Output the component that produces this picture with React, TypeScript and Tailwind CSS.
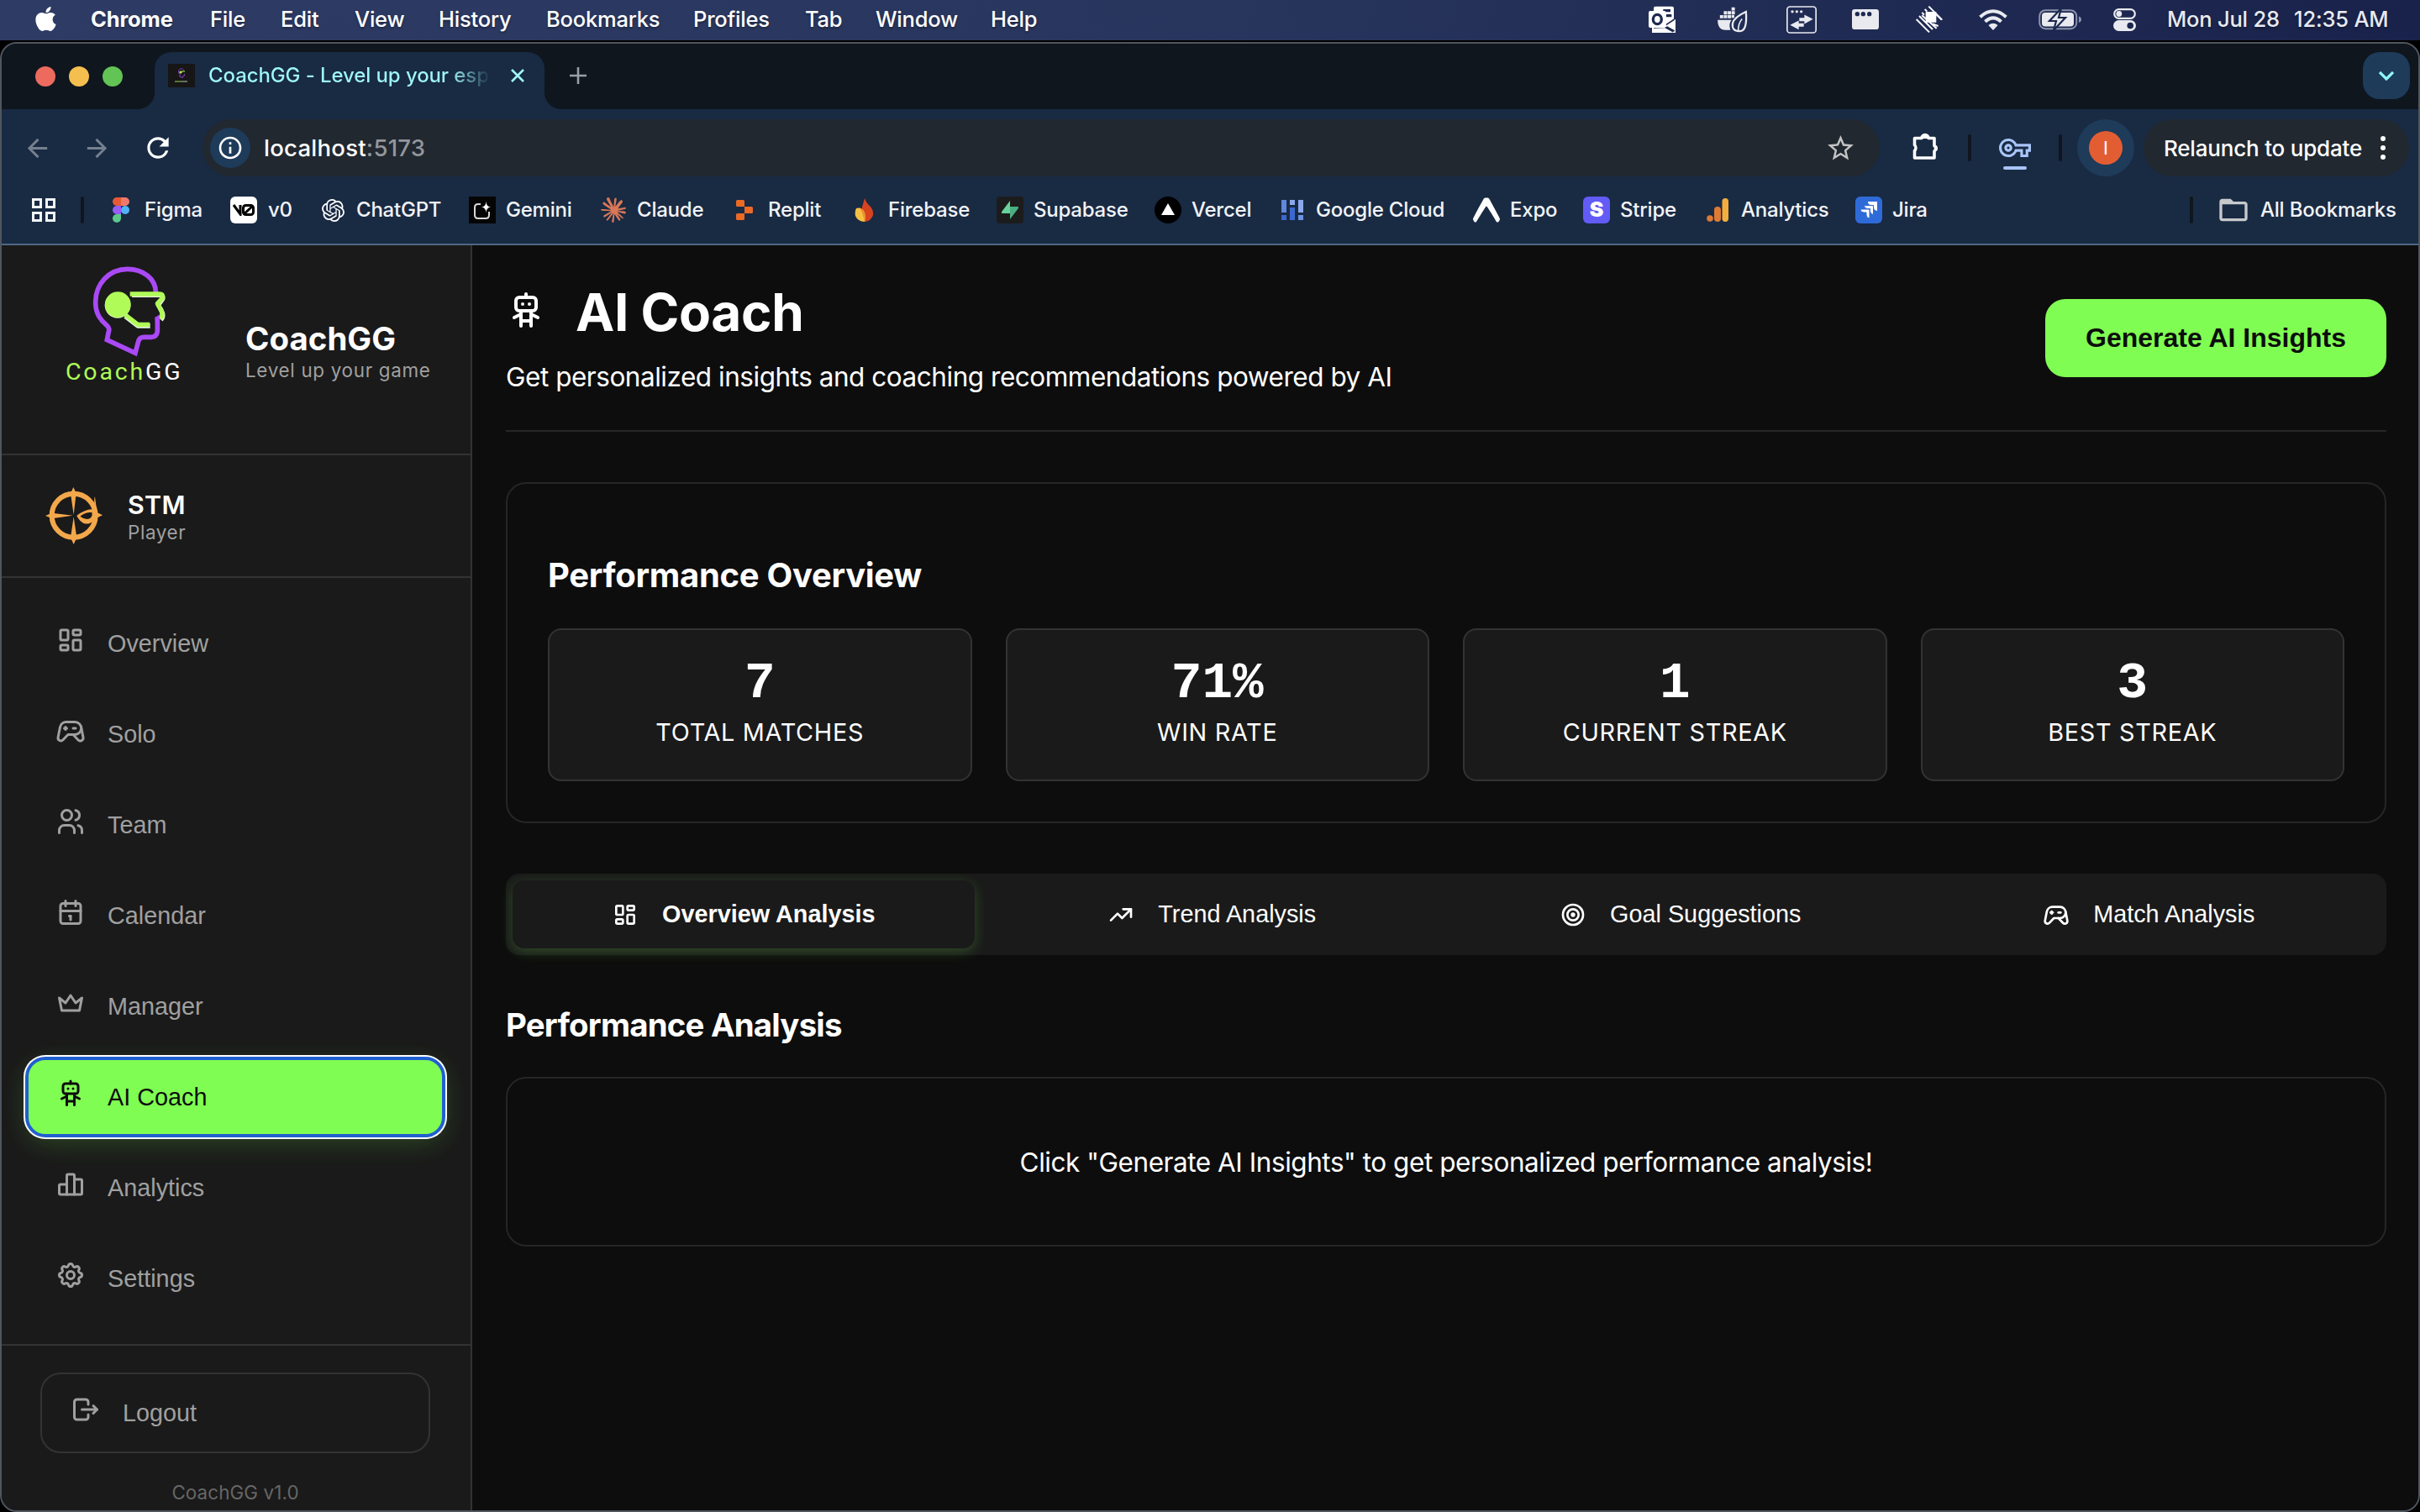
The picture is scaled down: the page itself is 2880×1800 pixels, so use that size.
import type { ReactNode } from "react";
import { FaApple } from "react-icons/fa";
import {
  MdArrowBack,
  MdArrowForward,
  MdRefresh,
  MdStarBorder,
  MdInfoOutline,
  MdOutlineVpnKey,
  MdFolderOpen,
} from "react-icons/md";
import { SiOpenai, SiReplit, SiExpo, SiClaude } from "react-icons/si";
import {
  TbLayoutDashboard,
  TbDeviceGamepad2,
  TbUsers,
  TbCalendar,
  TbCrown,
  TbSettings,
  TbLogout,
  TbTrendingUp,
  TbTarget,
} from "react-icons/tb";

type IconProps = { className?: string };

/* ---------- hand-drawn icons ---------- */

function Robot({ className }: IconProps) {
  return (
    <svg viewBox="0 0 24 24" className={className} fill="none" stroke="currentColor" strokeWidth="2" strokeLinecap="round" strokeLinejoin="round">
      <path d="M6 6a2 2 0 0 1 2 -2h8a2 2 0 0 1 2 2v4a2 2 0 0 1 -2 2h-8a2 2 0 0 1 -2 -2l0 -4" />
      <path d="M12 2v2M9 12v9M15 12v9M5 16l4 -2M15 14l4 2M9 18h6M10 8v.01M14 8v.01" />
    </svg>
  );
}

function Bars({ className }: IconProps) {
  return (
    <svg viewBox="0 0 24 24" className={className} fill="none" stroke="currentColor" strokeWidth="2" strokeLinecap="round" strokeLinejoin="round">
      <path d="M3 13a1 1 0 0 1 1 -1h4a1 1 0 0 1 1 1v7H4a1 1 0 0 1 -1 -1z" />
      <path d="M15 9a1 1 0 0 1 1 -1h4a1 1 0 0 1 1 1v10a1 1 0 0 1 -1 1h-5z" />
      <path d="M9 5a1 1 0 0 1 1 -1h4a1 1 0 0 1 1 1v15h-6z" />
    </svg>
  );
}

function Puzzle({ className }: IconProps) {
  return (
    <svg viewBox="0 0 34 34" className={className}>
      <path
        d="M3.500 7.500h8.500a4 4 0 0 1 8 0h7v9a4 4 0 0 1 0 6.500v8H3.500v-8.500a5 5 0 0 0 0 -7z"
        fill="none"
        stroke="currentColor"
        strokeWidth="3.600"
        strokeLinejoin="round"
      />
      <path d="M12 8a4 4 0 0 1 8 0zM27 15.500a4 4 0 0 1 0 8z" fill="currentColor" />
    </svg>
  );
}

function CoachLogo() {
  return (
    <svg viewBox="0 0 420 348" className="h-[116px] w-[140px]">
      <g fill="none" strokeLinejoin="round">
        <path d="M358 117C358 70 315 34 257 34C190 34 143 88 143 152C143 196 163 218 184 236C194 245 192 252 189 262L184 287L285 334L294 300Q297 277 315 277H342Q362 277 364 256V205" stroke="#aa49f6" strokeWidth="17" strokeLinejoin="miter" />
        <path d="M272 124H372Q386 124 382 138L366 160Q376 172 382 190Q385 202 376 212" stroke="#e8f5dc" strokeWidth="16" transform="translate(1 3)" />
        <path d="M266 123H372Q386 123 382 137L364 157Q372 172 380 188Q384 202 374 210" stroke="#b0fb58" strokeWidth="16" />
        <path d="M250 200L294 234H338" stroke="#e8f5dc" strokeWidth="18" transform="translate(0 2)" />
        <path d="M250 198L294 232H336" stroke="#b0fb58" strokeWidth="16" />
      </g>
      <circle cx="222" cy="163" r="46" fill="#e8f5dc" />
      <circle cx="223" cy="161" r="46" fill="#b0fb58" />
      <path d="M356 208L371 196V220H356z" fill="#aa49f6" />
    </svg>
  );
}

function Compass() {
  return (
    <svg viewBox="0 0 204 204" className="size-[68px]" fill="#f3a84b">
      <circle cx="101" cy="101" r="78" fill="none" stroke="#f3a84b" strokeWidth="18" />
      <path d="M100 0L110 22L101 98L90 22zM101 106L112 180L101 204L90 180zM0 102L24 92L98 101L24 112zM204 100L180 88V112z" />
      <path d="M177 32C170 56 180 60 176 78C150 78 128 88 112 102C124 126 142 136 160 128C176 122 182 108 180 84C184 66 178 50 177 32z" />
      <path d="M124 104Q142 88 166 90Q170 106 158 112Q142 118 124 104z" fill="#1a1a1a" />
    </svg>
  );
}

/* ---------- menu bar ---------- */

const menus: [string, string][] = [
  ["File", "w-[84px]"],
  ["Edit", "w-[88px]"],
  ["View", "w-[100px]"],
  ["History", "w-[128px]"],
  ["Bookmarks", "w-[175px]"],
  ["Profiles", "w-[133px]"],
  ["Tab", "w-[84px]"],
  ["Window", "w-[137px]"],
  ["Help", "w-[80px]"],
];

function MenuBar() {
  return (
    <header className="flex h-12 shrink-0 items-center bg-linear-to-r from-[#2e3b65] via-[#28355d] to-[#19224a] pb-0.5 pl-10 text-[25.5px] font-medium tracking-[-0.2px] whitespace-nowrap text-white [text-shadow:0_2px_3px_rgba(0,0,0,0.35)]">
      <FaApple className="mb-0.5 -ml-0.5 size-[33px]" />
      <span className="ml-[37px] w-[142px] text-[25.5px] font-bold tracking-[-0.15px]">Chrome</span>
      {menus.map(([m, w]) => (
        <span key={m} className={w}>
          {m}
        </span>
      ))}
      <div className="flex-1" />
      <div className="flex items-center text-[#e8eaf0]">
        <div className="w-[82px]">
          <svg viewBox="0 0 96 96" className="size-8">
            <path d="M18 8q0 -6 6 -6H84q6 0 6 6V60H18z" fill="#fff" />
            <path d="M52 12H78V22H52zM62 30H82V40H62z" fill="#1f2a50" />
            <path d="M12 48H96V96H12z" fill="#fff" />
            <path d="M18 78L58 76L88 92M62 68L92 48M64 74L92 90" stroke="#1f2a50" strokeWidth="5" fill="none" />
            <rect x="0" y="18" width="62" height="60" rx="6" fill="#fff" />
            <ellipse cx="31" cy="48" rx="15" ry="17" fill="none" stroke="#1f2a50" strokeWidth="10" />
          </svg>
        </div>
        <div className="w-[82px]">
          <svg viewBox="0 0 108 94" className="h-[31px] w-9" fill="currentColor">
            <path d="M8 30h12v12H8zM22 30h12v12H22zM36 30h12v12H36zM22 16h12v12H22zM36 16h12v12H36zM50 16h12v12H50zM50 2h12v12H50zM50 30h10v10H50z" />
            <path d="M0 48H50Q38 62 46 84H28Q0 84 0 48z" />
            <path d="M102 18Q108 90 78 88Q50 88 54 60Q58 38 102 18z" fill="none" stroke="currentColor" strokeWidth="7" />
            <path d="M74 88Q74 60 88 44" fill="none" stroke="currentColor" strokeWidth="5" />
          </svg>
        </div>
        <div className="w-[78px]">
          <svg viewBox="0 0 108 98" className="h-[33px] w-9" fill="currentColor">
            <rect x="2.5" y="2.5" width="103" height="93" rx="10" fill="none" stroke="currentColor" strokeWidth="5" />
            <circle cx="21" cy="20" r="5" />
            <circle cx="37" cy="20" r="5" />
            <circle cx="53" cy="20" r="5" />
            <path d="M46 42H64V31L95 47L64 64V54H46z" />
            <path d="M62 62H44V52L13 68L44 84V74H62z" />
          </svg>
        </div>
        <div className="w-[76px]">
          <svg viewBox="0 0 96 72" className="h-6 w-8">
            <rect width="96" height="72" rx="10" fill="currentColor" />
            <circle cx="19" cy="17" r="8" fill="#1f2a50" />
            <circle cx="40" cy="17" r="8" fill="#1f2a50" />
            <circle cx="62" cy="17" r="8" fill="#1f2a50" />
          </svg>
        </div>
        <div className="w-[75px]">
          <svg viewBox="0 0 96 96" className="size-8" fill="none" stroke="#fff" strokeWidth="6">
            <path d="M46 2L94 50M32 12L40 20M22 24L30 32M12 36L60 84M2 48L48 94M22 34L74 80M60 64L80 72M74 32L92 50" />
            <path d="M38 24H70V56H38z" fill="#fff" />
          </svg>
        </div>
        <div className="w-[71px]">
          <svg viewBox="0 0 102 76" className="h-[25px] w-[34px]" fill="none" stroke="currentColor" strokeWidth="12">
            <path d="M4 28Q51 -14 98 28M22 45Q51 18 80 45" />
            <path d="M51 76L34 58Q51 44 68 58z" fill="currentColor" stroke="none" />
          </svg>
        </div>
        <div className="w-[89px]">
          <svg viewBox="0 0 52 26" className="h-[26px] w-[52px]">
            <rect x="1.2" y="2.2" width="44" height="22" rx="7" fill="none" stroke="#8b93ac" strokeWidth="2" />
            <rect x="4" y="5" width="38" height="16.500" rx="4" fill="currentColor" />
            <path d="M48 9.500q3 1 3 3.700t-3 3.700z" fill="#8b93ac" />
            <path d="M27 0L13 15h8l-3 11L32 11h-8z" fill="currentColor" stroke="#1c274d" strokeWidth="2.200" />
          </svg>
        </div>
        <div className="w-[64px]">
          <svg viewBox="0 0 27 27" className="size-[27px]">
            <rect x="1.200" y="1.200" width="24.600" height="10.600" rx="5.300" fill="none" stroke="currentColor" strokeWidth="2.200" />
            <circle cx="6.800" cy="6.500" r="3.400" fill="currentColor" />
            <rect y="14" width="27" height="13" rx="6.500" fill="currentColor" />
            <circle cx="20.200" cy="20.500" r="3.800" fill="#1c274d" />
          </svg>
        </div>
        <span className="w-[151px]">Mon Jul 28</span>
        <span className="w-[150px] tracking-[-0.2px]">12:35 AM</span>
      </div>
    </header>
  );
}

/* ---------- browser chrome ---------- */

function TabStrip() {
  return (
    <div className="flex h-[78px] shrink-0 items-start bg-[#0f161e] pt-2.5">
      <div className="flex h-[58px] w-[162px] items-center gap-4 pl-10">
        <i className="size-6 rounded-full bg-[#ed6a5f]" />
        <i className="size-6 rounded-full bg-[#f5bf4f]" />
        <i className="size-6 rounded-full bg-[#61c454]" />
      </div>
      <i className="h-5 w-5 self-end bg-[radial-gradient(circle_at_0_0,#0f161e_19.5px,#192a43_20.500px)]" />
      <div className="flex h-[68px] w-[464px] items-start rounded-t-[20px] bg-[#192a43] pl-4">
        <div className="mt-[14px] flex size-[32px] h-7 flex-col items-center justify-center bg-[#161616]">
          <svg viewBox="0 0 20 20" className="size-5">
            <path d="M13 4C12 1 7 1 6.500 5q0 3 2 4l-1 2 4 1.500 .6-2.500h1.500V8" fill="none" stroke="#8a3cc8" strokeWidth="1" />
            <circle cx="9" cy="6" r="1.600" fill="#b0fb58" />
            <path d="M10 5h4" stroke="#b0fb58" />
            <path d="M2 17h9" stroke="#6f9440" strokeWidth="1.500" />
            <path d="M11 17h6" stroke="#888" strokeWidth="1.500" />
          </svg>
        </div>
        <div className="mt-[11px] ml-4 w-[350px] bg-linear-to-r from-[#9ff8f8] from-82% to-transparent to-96% bg-clip-text text-[24px] leading-[34px] font-medium tracking-[-0.1px] whitespace-nowrap text-transparent">
          CoachGG - Level up your esp
        </div>
        <svg viewBox="0 0 16 16" className="mt-[20px] ml-[10px] size-4" stroke="#9ff8f8" strokeWidth="2.600">
          <path d="M1 1L15 15M15 1L1 15" />
        </svg>
      </div>
      <i className="h-5 w-5 self-end bg-[radial-gradient(circle_at_100%_0,#0f161e_19.5px,#192a43_20.500px)]" />
      <svg viewBox="0 0 20 20" className="mt-[18px] ml-2.5 size-5" stroke="#9a9fa6" strokeWidth="2.600">
        <path d="M10 0V20M0 10H20" />
      </svg>
      <div className="flex-1" />
      <div className="mr-2.5 flex size-14 items-center justify-center rounded-[20px] bg-[#1e3b5a]">
        <svg viewBox="0 0 18 12" className="h-3 w-[18px]" fill="none" stroke="#8ff6f6" strokeWidth="3.200">
          <path d="M1 2L9 10L17 2" />
        </svg>
      </div>
    </div>
  );
}

function Toolbar() {
  return (
    <div className="flex h-[92px] shrink-0 items-center pl-[25px] text-[27px] font-medium text-white">
      <MdArrowBack className="size-[35px] text-[#75808f]" />
      <MdArrowForward className="ml-[36px] size-[35px] text-[#75808f]" />
      <MdRefresh className="ml-[36px] size-[38px]" />
      <div className="ml-[34px] flex h-[68px] w-[1996px] items-center rounded-full bg-[#212830] pl-[9px]">
        <div className="flex size-12 items-center justify-center rounded-full bg-[#1e3b5a]">
          <MdInfoOutline className="size-8" />
        </div>
        <span className="ml-4 pt-px text-[27.5px] tracking-[0.25px]">
          localhost<span className="text-[#93979c]">:5173</span>
        </span>
        <MdStarBorder className="mr-[28px] ml-auto size-[37px] text-[#c3c3c3]" />
      </div>
      <Puzzle className="mb-1 ml-[38px] size-[34px]" />
      <i className="ml-[33px] h-8 w-1 rounded bg-[#0f161e]" />
      <div className="relative ml-[33px]">
        <MdOutlineVpnKey className="size-[38px] text-[#a9c5f8]" />
        <i className="absolute top-[41px] left-[5px] h-1 w-7 rounded bg-[#a9c5f8]" />
      </div>
      <i className="ml-[33px] h-8 w-1 rounded bg-[#0f161e]" />
      <div className="ml-[18px] flex size-[68px] items-center justify-center rounded-full bg-[#1e3b5a]">
        <div className="flex size-10 items-center justify-center rounded-full bg-[#e35d33] text-[22px] font-normal">I</div>
      </div>
      <div className="ml-[11px] flex h-[68px] w-[316px] items-center rounded-full bg-[#212830] pl-6">
        <span className="w-[258px] text-[26px] tracking-[-0.2px] whitespace-nowrap">Relaunch to update</span>
        <div className="flex flex-col gap-[5px]">
          <i className="size-1.5 rounded-full bg-white" />
          <i className="size-1.5 rounded-full bg-white" />
          <i className="size-1.5 rounded-full bg-white" />
        </div>
      </div>
    </div>
  );
}

const bookmarks: [string, string, ReactNode][] = [
  [
    "Figma",
    "w-[147px]",
    <svg viewBox="0 0 20 30" className="h-[30px] w-5">
      <path d="M10 0H5a5 5 0 0 0 0 10h5z" fill="#e55a35" />
      <path d="M10 0h5a5 5 0 0 1 0 10h-5z" fill="#f0796b" />
      <path d="M10 10H5a5 5 0 0 0 0 10h5z" fill="#965cf6" />
      <circle cx="15" cy="15" r="5" fill="#53b3f9" />
      <path d="M10 20H5a5 5 0 1 0 5 5z" fill="#5bc98a" />
    </svg>,
  ],
  [
    "v0",
    "w-[105px]",
    <div className="-ml-0.5 flex size-8 shrink-0 items-center justify-center rounded-md bg-white">
      <svg viewBox="0 0 26 14" className="h-3.5 w-[26px]" fill="none" stroke="#000" strokeWidth="3">
        <path d="M1 1L9 12V1" />
        <rect x="12.500" y="1.500" width="12" height="11" rx="3" />
        <path d="M13 12L24 2" />
      </svg>
    </div>,
  ],
  ["ChatGPT", "w-[178px]", <SiOpenai className="size-[27px] text-white" />],
  [
    "Gemini",
    "w-[156px]",
    <svg viewBox="0 0 32 32" className="size-8">
      <rect width="32" height="32" fill="#050505" />
      <path d="M14 9H11Q7 9 7 13V22Q7 26 11 26H20Q24 26 24 22V18" fill="none" stroke="#d8d8d8" strokeWidth="2" />
      <path d="M20.500 6Q21 12 26 12.500Q21 13 20.500 19Q20 13 15 12.500Q20 12 20.500 6z" fill="#fff" />
    </svg>,
  ],
  ["Claude", "w-[156px]", <SiClaude className="size-[30px] text-[#d97757]" />],
  ["Replit", "w-[143px]", <SiReplit className="size-6 text-[#ea6a26]" />],
  [
    "Firebase",
    "w-[173px]",
    <svg viewBox="0 0 24 28" className="h-7 w-6">
      <path d="M12 0Q14 6 19 10Q23 15 22 20Q20 27 12 28L8 14Q10 7 12 0z" fill="#d5431f" />
      <path d="M2 12Q7 10 11 15Q14 20 12 28Q4 28 1 21Q0 16 2 12z" fill="#f6c142" />
      <path d="M6 11Q10 13 12 18Q13 23 12 28Q10 18 6 11z" fill="#ee8d32" />
    </svg>,
  ],
  [
    "Supabase",
    "w-[188px]",
    <div className="flex size-8 items-center justify-center rounded-sm bg-[#1c1c1c]">
      <svg viewBox="0 0 22 26" className="h-[26px] w-[22px]">
        <path d="M11 2V17H2Q0 17 1.500 14.500z" fill="#68d39a" />
        <path d="M11 24V9H20Q22 9 20.500 11.500z" fill="#4aae80" />
      </svg>
    </div>,
  ],
  [
    "Vercel",
    "w-[148px]",
    <div className="flex size-8 items-center justify-center rounded-full bg-black">
      <svg viewBox="0 0 16 14" className="-mt-0.5 h-3.5 w-4">
        <path d="M8 0L16 14H0z" fill="#fff" />
      </svg>
    </div>,
  ],
  [
    "Google Cloud",
    "w-[231px]",
    <svg viewBox="0 0 26 24" className="h-6 w-[26px]">
      <path d="M0 0h6v15H0z" fill="#5f88dd" />
      <path d="M10 0h6v6h-6zM20 0h6v15h-6z" fill="#8ba9ea" />
      <path d="M10 9h6v15h-6zM0 18h6v6H0z" fill="#3c68ce" />
      <path d="M20 18h6v6h-6z" fill="#6c93e4" />
    </svg>,
  ],
  ["Expo", "w-[131px]", <SiExpo className="size-8 text-white" />],
  [
    "Stripe",
    "w-[144px]",
    <div className="flex size-8 items-center justify-center rounded-md bg-[#635bf6] text-[25px] font-black text-white">S</div>,
  ],
  [
    "Analytics",
    "w-[180px]",
    <svg viewBox="0 0 26 28" className="h-7 w-[26px]">
      <circle cx="4" cy="24" r="3.800" fill="#dd7a33" />
      <rect x="9" y="10" width="8" height="18" rx="4" fill="#dd7a33" />
      <rect x="18.500" y="0" width="7.500" height="28" rx="3.700" fill="#f3ae3d" />
    </svg>,
  ],
  [
    "Jira",
    "w-[120px]",
    <div className="flex size-8 items-center justify-center rounded-md bg-[#2f6bd8]">
      <svg viewBox="0 0 20 20" className="size-5" fill="#fff">
        <path d="M9 0H20V11Q16 10.500 16 7V4H13Q9 4 9 0z" />
        <path d="M4.500 4.500H15.500V15.500Q11.500 15 11.500 11.500V8.500H8.500Q4.500 8.500 4.500 4.500z" stroke="#2f6bd8" />
        <path d="M0 9H11V20Q7 19.500 7 16V13H4Q0 13 0 9z" stroke="#2f6bd8" />
      </svg>
    </div>,
  ],
];

function BookmarksBar() {
  return (
    <div className="flex h-[68px] shrink-0 items-start pt-3 pl-9 text-[24px] font-medium tracking-[-0.22px] whitespace-nowrap text-[#f1f3f6]">
      <svg viewBox="0 0 28 28" className="mt-0.5 size-7" fill="none" stroke="currentColor" strokeWidth="3">
        <path d="M1.500 1.500h9v9h-9zM17.500 1.500h9v9h-9zM1.500 17.500h9v9h-9zM17.500 17.500h9v9h-9z" />
      </svg>
      <i className="ml-[30px] h-8 w-1 rounded bg-[#0f161e]" />
      <div className="ml-7 flex">
        {bookmarks.map(([name, width, icon]) => (
          <div key={name} className={`flex h-8 items-center ${width}`}>
            <span className="flex w-8 shrink-0 justify-center">{icon}</span>
            <span className="ml-3">{name}</span>
          </div>
        ))}
      </div>
      <i className="ml-auto h-8 w-1 rounded bg-[#0f161e]" />
      <MdFolderOpen className="-mt-1 ml-[28px] size-10 text-[#c7c9cc]" />
      <span className="ml-3 w-[188px] leading-8">All Bookmarks</span>
    </div>
  );
}

/* ---------- sidebar ---------- */

const nav = [
  { label: "Overview", Icon: TbLayoutDashboard },
  { label: "Solo", Icon: TbDeviceGamepad2 },
  { label: "Team", Icon: TbUsers },
  { label: "Calendar", Icon: TbCalendar },
  { label: "Manager", Icon: TbCrown },
  { label: "AI Coach", Icon: Robot, active: true },
  { label: "Analytics", Icon: Bars },
  { label: "Settings", Icon: TbSettings },
];

function Sidebar() {
  return (
    <aside className="flex w-[560px] shrink-0 flex-col border-r-2 border-[#333] bg-[#1a1a1a]">
      <div className="flex h-[250px] shrink-0 border-b-2 border-[#333] pl-[64px]">
        <div className="w-[226px] pt-[17px]">
          <CoachLogo />
          <div className="mt-[4px] ml-[12px] flex font-['Roboto'] text-[28.5px] leading-[28px] tracking-[2.8px]">
            <span className="text-[#b0fb58]">Coach</span>
            <span className="text-white">GG</span>
          </div>
        </div>
        <div className="pt-[87px]">
          <div className="text-[38.4px] leading-[48px] font-bold tracking-[0.05px] text-white">CoachGG</div>
          <div className="text-[22.4px] leading-[28px] tracking-[0.7px] text-[#a0a0a0]">Level up your game</div>
        </div>
      </div>
      <div className="flex h-[146px] shrink-0 items-center border-b-2 border-[#333] pl-[52px]">
        <Compass />
        <div className="mt-0.5 ml-[30px]">
          <div className="text-[30.4px] leading-[37px] font-semibold tracking-[0.3px] text-white">STM</div>
          <div className="text-[22.4px] leading-[28px] tracking-[0.6px] text-[#a0a0a0]">Player</div>
        </div>
      </div>
      <nav className="flex h-[912px] shrink-0 flex-col gap-4 px-[30px] pt-8 font-['Liberation_Sans'] text-[28.8px]">
        {nav.map(({ label, Icon, active }) => (
          <div
            key={label}
            className={
              active
                ? "flex h-[92px] w-[496px] shrink-0 items-center rounded-[22px] border-2 border-[#2160cf] bg-[#80fd52] pl-8 text-[#0d0d0d] shadow-[0_0_0_2px_#2160cf,0_0_0_4px_#fff,0_8px_32px_rgba(127,255,80,0.2)]"
                : "flex h-[92px] w-[496px] shrink-0 items-center pl-[34px] text-[#a0a0a0]"
            }
          >
            <Icon className="mb-2 size-9" />
            <span className="ml-[26px] pt-0.5">{label}</span>
          </div>
        ))}
      </nav>
      <div className="flex-1 border-t-2 border-[#333] px-[46px] pt-8 font-['Liberation_Sans'] text-[28.8px] text-[#a0a0a0]">
        <div className="flex h-24 w-[464px] items-center rounded-3xl border-2 border-[#333] pl-[34px]">
          <TbLogout className="mb-2 size-9" />
          <span className="ml-[26px] pt-0.5">Logout</span>
        </div>
        <div className="mt-[33px] w-[464px] text-center font-['Inter'] text-[22.4px] leading-[28px] tracking-[0.1px] text-[#666]">CoachGG v1.0</div>
      </div>
    </aside>
  );
}

/* ---------- main content ---------- */

const stats = [
  ["7", "TOTAL MATCHES"],
  ["71%", "WIN RATE"],
  ["1", "CURRENT STREAK"],
  ["3", "BEST STREAK"],
];

const tabs = [
  { label: "Overview Analysis", Icon: TbLayoutDashboard, active: true },
  { label: "Trend Analysis", Icon: TbTrendingUp },
  { label: "Goal Suggestions", Icon: TbTarget },
  { label: "Match Analysis", Icon: TbDeviceGamepad2 },
];

function Main() {
  return (
    <main className="flex flex-1 flex-col bg-[#0d0d0d] pr-[38px] pl-10 text-white">
      <div className="flex h-[222px] shrink-0 items-start justify-between border-b-2 border-[#262626]">
        <div className="pt-[41px]">
          <div className="flex items-center">
            <Robot className="mb-1 size-12" />
            <h1 className="ml-[35px] text-[62px] leading-[78px] font-bold tracking-[-0.3px]">AI Coach</h1>
          </div>
          <p className="mt-[18px] text-[31.5px] leading-[40px] tracking-[-0.47px]">Get personalized insights and coaching recommendations powered by AI</p>
        </div>
        <button className="mt-16 h-[93px] w-[406px] rounded-3xl bg-[#80fd52] pb-0.5 font-['Liberation_Sans'] text-[32px] font-bold text-[#0d0d0d]">
          Generate AI Insights
        </button>
      </div>

      <section className="mt-[60px] h-[406px] shrink-0 rounded-3xl border-2 border-[#262626] px-12 pt-[84px]">
        <h2 className="text-[40px] leading-[50px] font-bold tracking-[-0.3px]">Performance Overview</h2>
        <div className="mt-[38px] grid grid-cols-4 gap-10">
          {stats.map(([value, label]) => (
            <div key={label} className="flex h-[182px] flex-col items-center rounded-2xl border-2 border-[#333] bg-[#1a1a1a] pt-[29px]">
              <div className="font-['Liberation_Mono'] text-[61px] leading-[70px] font-bold">{value}</div>
              <div className="mt-[4px] text-[28.8px] leading-[38px] tracking-[0.7px]">{label}</div>
            </div>
          ))}
        </div>
      </section>

      <div className="mt-[60px] grid h-[97px] shrink-0 grid-cols-4 gap-2 rounded-2xl bg-[#1a1a1a] p-2 font-['Liberation_Sans'] text-[28.8px]">
        {tabs.map(({ label, Icon, active }) => (
          <div
            key={label}
            className={
              active
                ? "flex items-center justify-center rounded-[14px] bg-[#1a1a1a] font-bold shadow-[0_4px_16px_rgba(127,255,80,0.22)]"
                : "flex items-center justify-center"
            }
          >
            <Icon className="size-8" />
            <span className="ml-7">{label}</span>
          </div>
        ))}
      </div>

      <h2 className="mt-[58px] text-[38.4px] leading-[50px] font-bold tracking-[-0.8px]">Performance Analysis</h2>
      <div className="mt-[37px] flex h-[202px] shrink-0 items-center justify-center rounded-3xl border-2 border-[#262626] pt-0.5 text-[31.5px] tracking-[-0.45px]">
        Click "Generate AI Insights" to get personalized performance analysis!
      </div>
    </main>
  );
}

export default function App() {
  return (
    <div className="flex h-[1800px] w-[2880px] flex-col overflow-hidden bg-black font-['Inter',sans-serif]">
      <MenuBar />
      <div className="mt-0.5 flex min-h-0 flex-1 flex-col overflow-hidden rounded-[20px] border-2 border-[#50565e] bg-[#192a43]">
        <TabStrip />
        <Toolbar />
        <BookmarksBar />
        <div className="flex min-h-0 flex-1 border-t-2 border-[#4e6784]">
          <Sidebar />
          <Main />
        </div>
      </div>
    </div>
  );
}
